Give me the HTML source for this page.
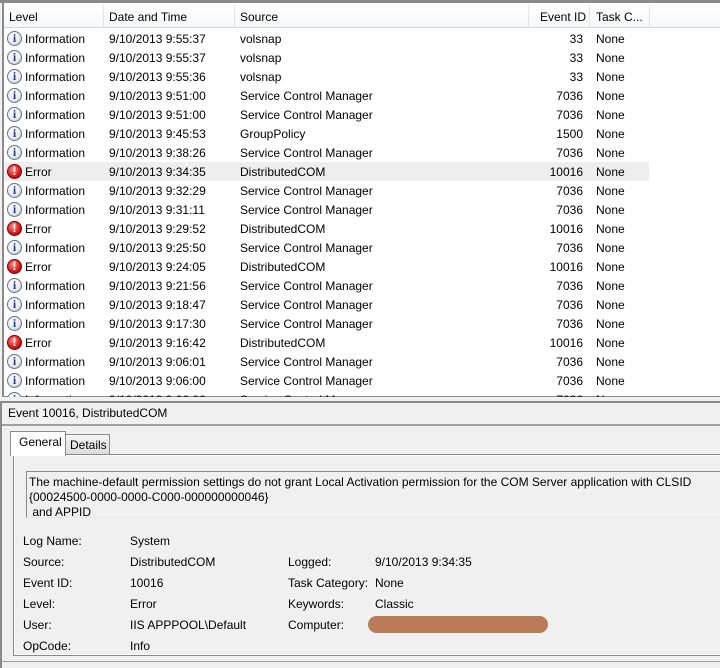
<!DOCTYPE html>
<html><head><style>
*{margin:0;padding:0;box-sizing:border-box}
body{width:720px;height:668px;background:#f0f0f0;font-family:"Liberation Sans",sans-serif;font-size:12px;color:#000;position:relative;overflow:hidden}
.a{position:absolute;white-space:nowrap}
.row{position:absolute;left:4px;width:716px;height:19px}
.row span{position:absolute;top:3px}
.ic{position:absolute;left:3px;top:2px;width:15px;height:15px;border-radius:50%;}
.info{background:radial-gradient(circle at 40% 35%,#fff,#e4e8f0 60%,#9aa4b4);border:1px solid #6a7280}
.info:after{content:"i";position:absolute;left:0;width:13px;top:-1px;text-align:center;font:bold 12px "Liberation Serif",serif;color:#1840b0}
.err{background:radial-gradient(circle at 40% 35%,#ff8a8a,#d01818 60%,#8a0000);border:1px solid #7a0000}
.err:after{content:"!";position:absolute;left:0;width:13px;top:-1px;text-align:center;font:bold 12px "Liberation Sans",sans-serif;color:#fff}
</style></head><body>
<div class="a" style="left:0;top:0;width:720px;height:3px;background:#8a8a8a"></div>
<div class="a" style="left:2px;top:3px;width:718px;height:394px;background:#fff;border-left:2px solid #8a8a8a;border-bottom:1px solid #8a8a8a"></div>
<div class="a" style="left:4px;top:5px;width:716px;height:23px;background:linear-gradient(#fff,#f6f7f9);border-bottom:1px solid #d5d5d5"></div>
<div class="a" style="left:103px;top:5px;width:1px;height:23px;background:#dfe2e6"></div>
<div class="a" style="left:234px;top:5px;width:1px;height:23px;background:#dfe2e6"></div>
<div class="a" style="left:528px;top:5px;width:1px;height:23px;background:#dfe2e6"></div>
<div class="a" style="left:589px;top:5px;width:1px;height:23px;background:#dfe2e6"></div>
<div class="a" style="left:649px;top:5px;width:1px;height:23px;background:#dfe2e6"></div>
<div class="a" style="left:9px;top:10px">Level</div>
<div class="a" style="left:109px;top:10px">Date and Time</div>
<div class="a" style="left:240px;top:10px">Source</div>
<div class="a" style="left:540px;top:10px">Event ID</div>
<div class="a" style="left:596px;top:10px">Task C...</div>
<div class="a" style="left:4px;top:162px;width:645px;height:19px;background:#eeeeee"></div>
<div id="rows"></div>
<script>
var d=[["i","9:55:37","volsnap","33"],["i","9:55:37","volsnap","33"],["i","9:55:36","volsnap","33"],["i","9:51:00","Service Control Manager","7036"],["i","9:51:00","Service Control Manager","7036"],["i","9:45:53","GroupPolicy","1500"],["i","9:38:26","Service Control Manager","7036"],["e","9:34:35","DistributedCOM","10016"],["i","9:32:29","Service Control Manager","7036"],["i","9:31:11","Service Control Manager","7036"],["e","9:29:52","DistributedCOM","10016"],["i","9:25:50","Service Control Manager","7036"],["e","9:24:05","DistributedCOM","10016"],["i","9:21:56","Service Control Manager","7036"],["i","9:18:47","Service Control Manager","7036"],["i","9:17:30","Service Control Manager","7036"],["e","9:16:42","DistributedCOM","10016"],["i","9:06:01","Service Control Manager","7036"],["i","9:06:00","Service Control Manager","7036"],["i","9:06:00","Service Control Manager","7036"]];
var h="";
for(var k=0;k<d.length;k++){var r=d[k];var t=29+19*k;
h+='<div class="row" style="top:'+t+'px"><div class="ic '+(r[0]=="i"?"info":"err")+'"></div><span style="left:21px">'+(r[0]=="i"?"Information":"Error")+'</span><span style="left:105px">9/10/2013 '+r[1]+'</span><span style="left:236px">'+r[2]+'</span><span style="right:137px">'+r[3]+'</span><span style="left:592px">None</span></div>';}
document.getElementById("rows").innerHTML=h;
</script>
<div class="a" style="left:0;top:397px;width:720px;height:271px;background:#f0f0f0"></div>
<div class="a" style="left:0;top:401px;width:720px;height:2px;background:#8a8a8a"></div>
<div class="a" style="left:0;top:401px;width:2px;height:267px;background:#8a8a8a"></div>
<div class="a" style="left:8px;top:406px">Event 10016, DistributedCOM</div>
<div class="a" style="left:2px;top:424px;width:718px;height:2px;background:#a0a0a0"></div>
<div class="a" style="left:13px;top:454px;width:707px;height:202px;border:1px solid #8a8a8a;border-right:none;background:#f0f0f0"></div>
<div class="a" style="left:14px;top:455px;width:706px;height:200px;border:1px solid #fff;border-right:none"></div>
<div class="a" style="left:65px;top:434px;width:45px;height:21px;border:1px solid #8a8a8a;background:linear-gradient(#f6f6f6,#dcdcdc);padding:3px 0 0 4px">Details</div>
<div class="a" style="left:10px;top:431px;width:56px;height:25px;border:1px solid #8a8a8a;border-bottom:none;background:#fff;padding:3px 0 0 8px">General</div>
<div class="a" style="left:26px;top:471px;width:694px;height:47px;border-top:1px solid #8a8a8a;border-left:1px solid #8a8a8a;border-bottom:1px solid #e8e8e8;padding:3px 0 0 2px;line-height:15px">The machine-default permission settings do not grant Local Activation permission for the COM Server application with CLSID<br>{00024500-0000-0000-C000-000000000046}<br>&nbsp;and APPID</div>
<div class="a" style="left:23px;top:534px">Log Name:</div><div class="a" style="left:130px;top:534px">System</div>
<div class="a" style="left:23px;top:555px">Source:</div><div class="a" style="left:130px;top:555px">DistributedCOM</div>
<div class="a" style="left:23px;top:576px">Event ID:</div><div class="a" style="left:130px;top:576px">10016</div>
<div class="a" style="left:23px;top:597px">Level:</div><div class="a" style="left:130px;top:597px">Error</div>
<div class="a" style="left:23px;top:618px">User:</div><div class="a" style="left:130px;top:618px">IIS APPPOOL\Default</div>
<div class="a" style="left:23px;top:639px">OpCode:</div><div class="a" style="left:130px;top:639px">Info</div>
<div class="a" style="left:288px;top:555px">Logged:</div><div class="a" style="left:375px;top:555px">9/10/2013 9:34:35</div>
<div class="a" style="left:288px;top:576px">Task Category:</div><div class="a" style="left:375px;top:576px">None</div>
<div class="a" style="left:288px;top:597px">Keywords:</div><div class="a" style="left:375px;top:597px">Classic</div>
<div class="a" style="left:288px;top:618px">Computer:</div>
<div class="a" style="left:368px;top:616px;width:180px;height:17px;border-radius:9px;background:#b97b58"></div>
<div class="a" style="left:2px;top:661px;width:718px;height:1px;background:#a0a0a0"></div>
</body></html>
